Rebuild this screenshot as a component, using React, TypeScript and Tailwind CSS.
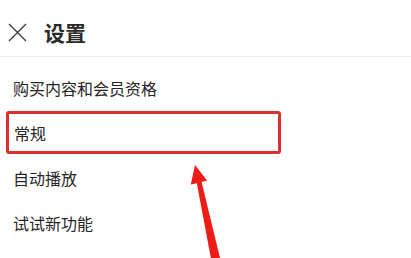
import React from "react";

const font = { fontFamily: '"Noto Sans CJK SC", "Noto Sans", sans-serif' };

function Arrow() {
  return (
    <svg className="absolute left-0 top-0 pointer-events-none" width="411" height="258" viewBox="0 0 411 258">
      <polygon
        points="195,165 207,180.5 201.6,182 221,262 212,264 196.8,183.2 190.8,184.5"
        fill="#ee1c17"
      />
    </svg>
  );
}

export default function App() {
  return (
    <div className="relative h-[258px] w-[411px] overflow-hidden bg-white text-[#262626]" style={font}>
      <div className="flex h-[57px] items-center border-b border-[#ececec] pl-[8px] pt-[8px]">
        <svg width="19" height="19" viewBox="0 0 19 19">
          <path d="M1 1L18 18M18 1L1 18" stroke="#3a3a3a" strokeWidth="1.3" fill="none" />
        </svg>
        <span className="ml-[17px] text-[21px] font-bold leading-none text-[#2a2a2a]">设置</span>
      </div>
      <div className="flex flex-col">
        <div className="flex h-[54px] items-center pl-[13px] pt-[8px] text-[16px]">购买内容和会员资格</div>
        <div className="ml-[6px] flex h-[43px] w-[275px] items-center rounded-[3px] border-[3px] border-[#d8322a] pl-[5px] text-[16px]">
          常规
        </div>
        <div className="flex h-[48px] items-center pl-[13px] text-[16px]">自动播放</div>
        <div className="flex h-[42px] items-center pl-[13px] text-[16px]">试试新功能</div>
      </div>
      <Arrow />
    </div>
  );
}
